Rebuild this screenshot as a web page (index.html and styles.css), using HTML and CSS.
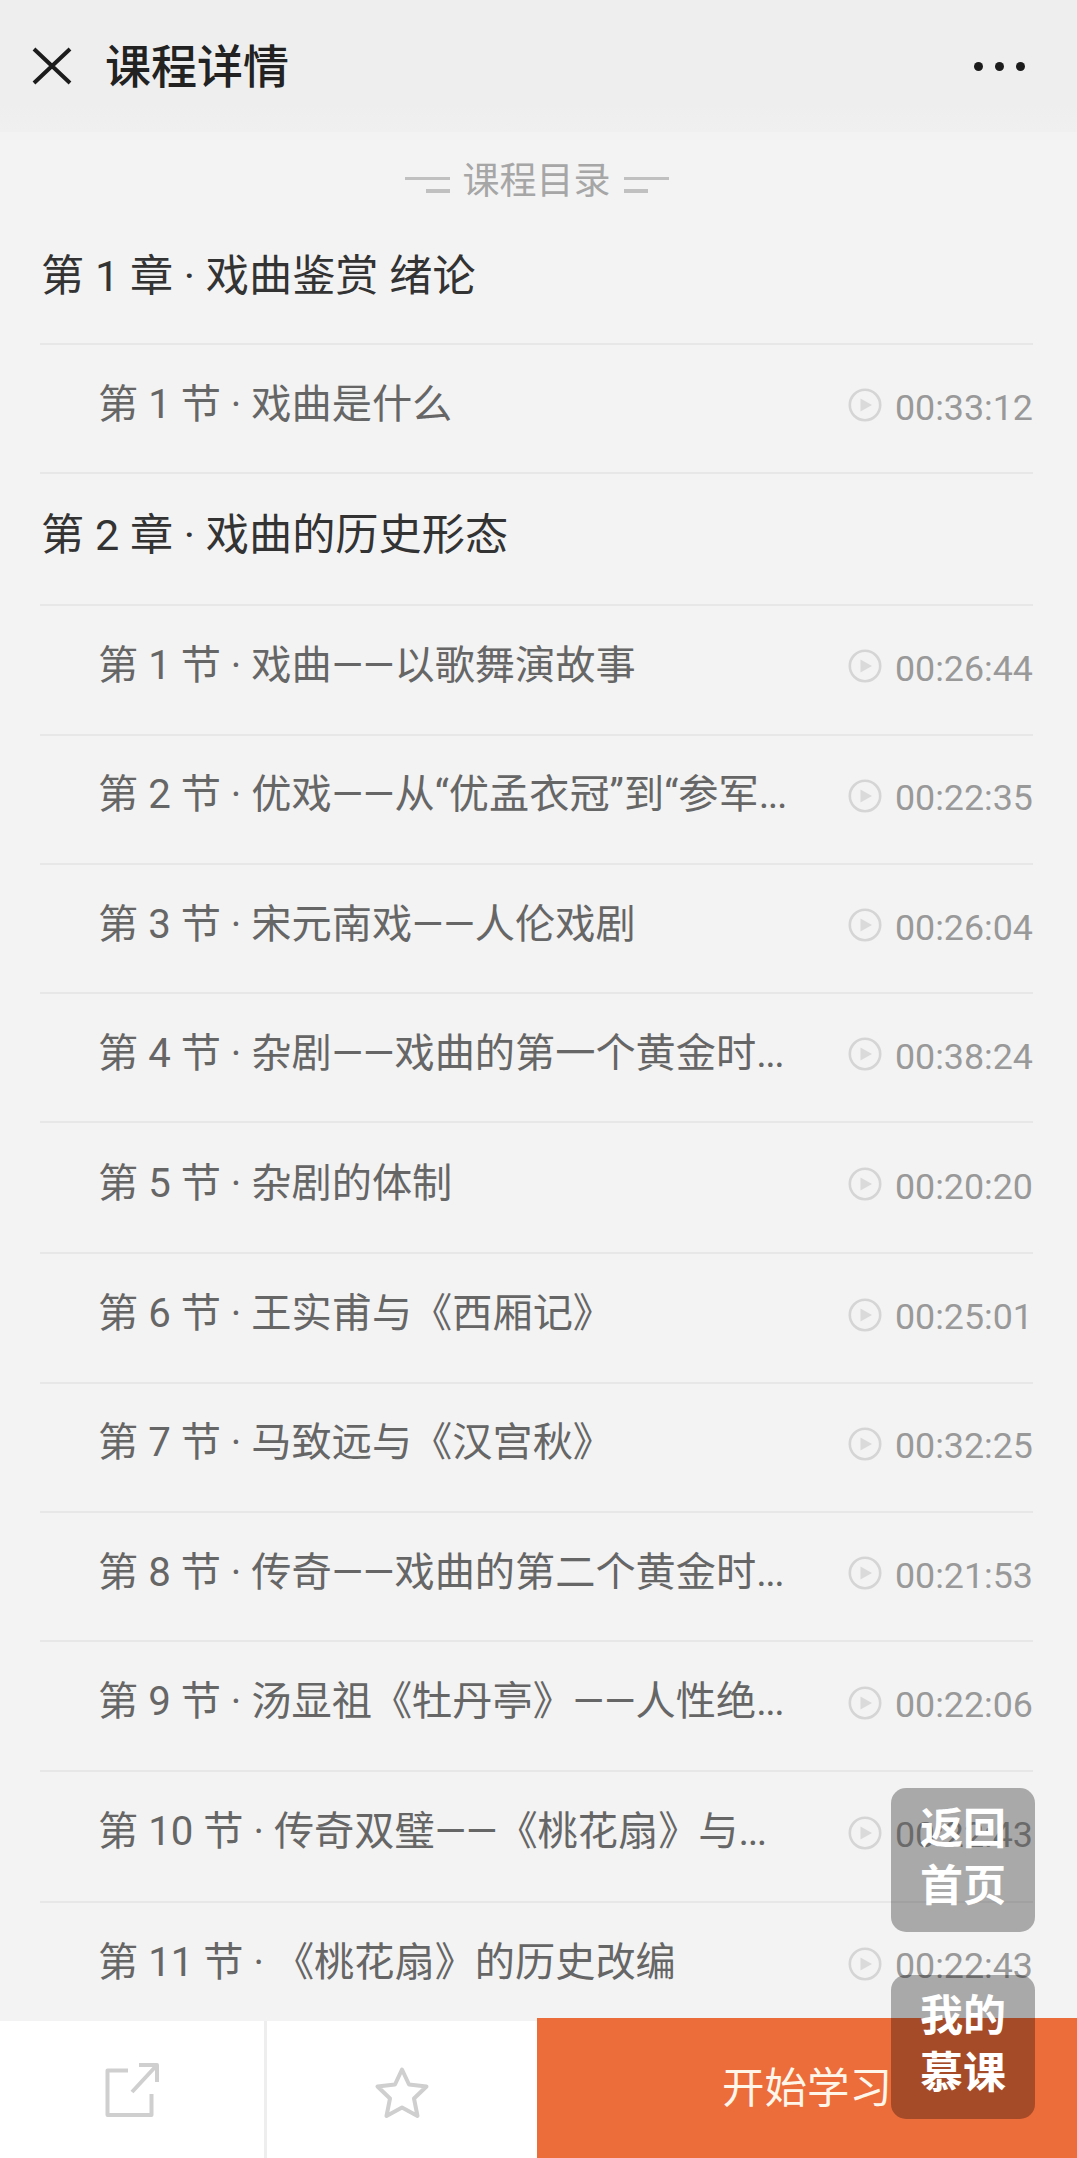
FILE: index.html
```html
<!DOCTYPE html>
<html lang="zh-CN">
<head>
<meta charset="utf-8">
<title>课程详情</title>
<link rel="stylesheet" href="styles.css">
</head>
<body>
<div class="page">
  <header class="topbar">
    <svg class="close" viewBox="0 0 40 38" width="40" height="38"><path d="M2 2 L38 36 M38 2 L2 36"/></svg>
    <h1 class="topbar-title">课程详情</h1>
    <div class="dots"><i></i><i></i><i></i></div>
  </header>
  <main class="catalog">
    <div class="catalog-head">
      <span class="dash"><i></i><i></i></span>
      <span>课程目录</span>
      <span class="dash"><i></i><i></i></span>
    </div>
    <div class="chapter chapter-first">第 1 章 · 戏曲鉴赏 绪论</div>
    <div class="lesson"><span class="lesson-name">第 1 节 · 戏曲是什么</span><span class="time"><svg class="play" viewBox="0 0 34 34"><circle cx="17" cy="17" r="15.2"/><path d="M12.5 10.5 L24 17 L12.5 23.5 Z"/></svg>00:33:12</span></div>
    <div class="chapter">第 2 章 · 戏曲的历史形态</div>
    <div class="lesson"><span class="lesson-name">第 1 节 · 戏曲——以歌舞演故事</span><span class="time"><svg class="play" viewBox="0 0 34 34"><circle cx="17" cy="17" r="15.2"/><path d="M12.5 10.5 L24 17 L12.5 23.5 Z"/></svg>00:26:44</span></div>
    <div class="lesson"><span class="lesson-name">第 2 节 · 优戏——从“优孟衣冠”到“参军<span class="more">...</span></span><span class="time"><svg class="play" viewBox="0 0 34 34"><circle cx="17" cy="17" r="15.2"/><path d="M12.5 10.5 L24 17 L12.5 23.5 Z"/></svg>00:22:35</span></div>
    <div class="lesson"><span class="lesson-name">第 3 节 · 宋元南戏——人伦戏剧</span><span class="time"><svg class="play" viewBox="0 0 34 34"><circle cx="17" cy="17" r="15.2"/><path d="M12.5 10.5 L24 17 L12.5 23.5 Z"/></svg>00:26:04</span></div>
    <div class="lesson"><span class="lesson-name">第 4 节 · 杂剧——戏曲的第一个黄金时<span class="more">...</span></span><span class="time"><svg class="play" viewBox="0 0 34 34"><circle cx="17" cy="17" r="15.2"/><path d="M12.5 10.5 L24 17 L12.5 23.5 Z"/></svg>00:38:24</span></div>
    <div class="lesson lesson-tall"><span class="lesson-name">第 5 节 · 杂剧的体制</span><span class="time"><svg class="play" viewBox="0 0 34 34"><circle cx="17" cy="17" r="15.2"/><path d="M12.5 10.5 L24 17 L12.5 23.5 Z"/></svg>00:20:20</span></div>
    <div class="lesson"><span class="lesson-name">第 6 节 · 王实甫与《西厢记》</span><span class="time"><svg class="play" viewBox="0 0 34 34"><circle cx="17" cy="17" r="15.2"/><path d="M12.5 10.5 L24 17 L12.5 23.5 Z"/></svg>00:25:01</span></div>
    <div class="lesson"><span class="lesson-name">第 7 节 · 马致远与《汉宫秋》</span><span class="time"><svg class="play" viewBox="0 0 34 34"><circle cx="17" cy="17" r="15.2"/><path d="M12.5 10.5 L24 17 L12.5 23.5 Z"/></svg>00:32:25</span></div>
    <div class="lesson"><span class="lesson-name">第 8 节 · 传奇——戏曲的第二个黄金时<span class="more">...</span></span><span class="time"><svg class="play" viewBox="0 0 34 34"><circle cx="17" cy="17" r="15.2"/><path d="M12.5 10.5 L24 17 L12.5 23.5 Z"/></svg>00:21:53</span></div>
    <div class="lesson"><span class="lesson-name">第 9 节 · 汤显祖《牡丹亭》——人性绝<span class="more">...</span></span><span class="time"><svg class="play" viewBox="0 0 34 34"><circle cx="17" cy="17" r="15.2"/><path d="M12.5 10.5 L24 17 L12.5 23.5 Z"/></svg>00:22:06</span></div>
    <div class="lesson lesson-tall"><span class="lesson-name">第 10 节 · 传奇双璧——《桃花扇》与<span class="more">...</span></span><span class="time"><svg class="play" viewBox="0 0 34 34"><circle cx="17" cy="17" r="15.2"/><path d="M12.5 10.5 L24 17 L12.5 23.5 Z"/></svg>00:22:43</span></div>
    <div class="lesson lesson-last"><span class="lesson-name">第 11 节 · 《桃花扇》的历史改编</span><span class="time"><svg class="play" viewBox="0 0 34 34"><circle cx="17" cy="17" r="15.2"/><path d="M12.5 10.5 L24 17 L12.5 23.5 Z"/></svg>00:22:43</span></div>
  </main>
  <footer class="actionbar">
    <div class="action action-share">
      <svg viewBox="0 0 56 56" width="56" height="56"><path d="M24 8.5 H3.5 V53 H47.5 V32 M35 3 H53 V20 M53 3 L28 30"/></svg>
    </div>
    <div class="action action-fav">
      <svg viewBox="0 0 56 54" width="56" height="54"><path d="M28 3.5 L35 18.5 L52.5 20.5 L40 32.5 L43.5 50 L28 41.5 L12.5 50 L16 32.5 L3.5 20.5 L21 18.5 Z"/></svg>
    </div>
    <div class="start"><span class="start-label">开始学习</span></div>
  </footer>
  <a class="float float-home">返回<br>首页</a>
  <a class="float float-mine">我的<br>慕课</a>
</div>
</body>
</html>
```

FILE: styles.css
```css
* { box-sizing: border-box; }
html, body { margin: 0; padding: 0; }
body {
  font-family: Roboto, "Noto Sans CJK SC", sans-serif;
  background: #f3f3f3;
}
.page {
  position: relative;
  width: 1077px;
  height: 2158px;
  overflow: hidden;
  display: flex;
  flex-direction: column;
  background: #f3f3f3;
}
.topbar {
  flex: none;
  height: 132px;
  display: flex;
  align-items: center;
  padding: 0 52px 0 32px;
  background: linear-gradient(#eeeeee 80%, #f0f0f0);
}
.close { flex: none; fill: none; stroke: #1c1c1c; stroke-width: 4; }
.topbar-title {
  flex: 1;
  margin: 0 0 0 33px;
  padding-top: 1px;
  font-size: 46px;
  line-height: 60px;
  font-weight: 500;
  color: #222;
}
.dots { display: flex; gap: 12px; }
.dots i { width: 9px; height: 9px; border-radius: 50%; background: #1c1c1c; }

.catalog {
  flex: 1;
  min-height: 0;
  padding: 0 44px 0 40px;
  overflow: hidden;
}
.catalog-head {
  height: 72px;
  padding-top: 28px;
  display: flex;
  align-items: center;
  justify-content: center;
  gap: 13px;
  font-size: 37px;
  line-height: 44px;
  color: #a6a6a6;
}
.dash { display: flex; flex-direction: column; align-items: flex-end; gap: 9px; width: 45px; padding-top: 6px; }
.dash i { display: block; height: 3px; background: #c0c0c0; width: 45px; }
.dash i + i { width: 24px; height: 4px; }
.dash:last-child { align-items: flex-start; }
.chapter {
  height: 132px;
  padding: 32px 0 0 1px;
  font-size: 43.2px;
  line-height: 60px;
  color: #333;
  border-bottom: 2px solid #e7e7e7;
  white-space: nowrap;
}
.chapter-first { height: 141px; padding-top: 43px; }
.lesson {
  height: 129.3px;
  display: flex;
  align-items: center;
  justify-content: space-between;
  padding: 0 0 0 58px;
  border-bottom: 2px solid #e7e7e7;
}
.lesson-tall { height: 131px; }
.lesson-last { border-bottom: 0; }
.lesson-name {
  font-size: 40.2px;
  line-height: 60px;
  color: #666;
  white-space: nowrap;
  padding-bottom: 8px;
}
.more { letter-spacing: -1.5px; }
.time {
  display: flex;
  align-items: center;
  gap: 13px;
  padding-bottom: 2px;
  font-size: 35.8px;
  line-height: 44px;
  color: #999;
}
.play { width: 34px; height: 34px; flex: none; margin-top: -5px; }
.play circle { fill: none; stroke: #d5d5d5; stroke-width: 2.6; }
.play path { fill: #dadada; }

.actionbar {
  flex: none;
  height: 140px;
  display: flex;
}
.action {
  margin-top: 3px;
  background: #fff;
  display: flex;
  align-items: center;
  justify-content: center;
}
.action svg { fill: none; stroke: #cfcfcf; stroke-width: 4; stroke-linejoin: round; }
.action-share { width: 267px; border-right: 3px solid #eeeeee; }
.action-fav { width: 270px; padding-top: 6px; }
.start {
  flex: 1;
  background: #ec6c3a;
  color: #fff6ea;
  font-size: 42.5px;
  display: flex;
  align-items: center;
  padding: 0 0 8px 185px;
}
.float {
  position: absolute;
  left: 891px;
  width: 144px;
  height: 144px;
  border-radius: 15px;
  background: rgba(0, 0, 0, 0.3);
  color: #fff;
  font-size: 43px;
  font-weight: 700;
  line-height: 57px;
  text-align: center;
  padding-top: 13px;
}
.float-home { top: 1788px; }
.float-mine { top: 1975px; }
```
